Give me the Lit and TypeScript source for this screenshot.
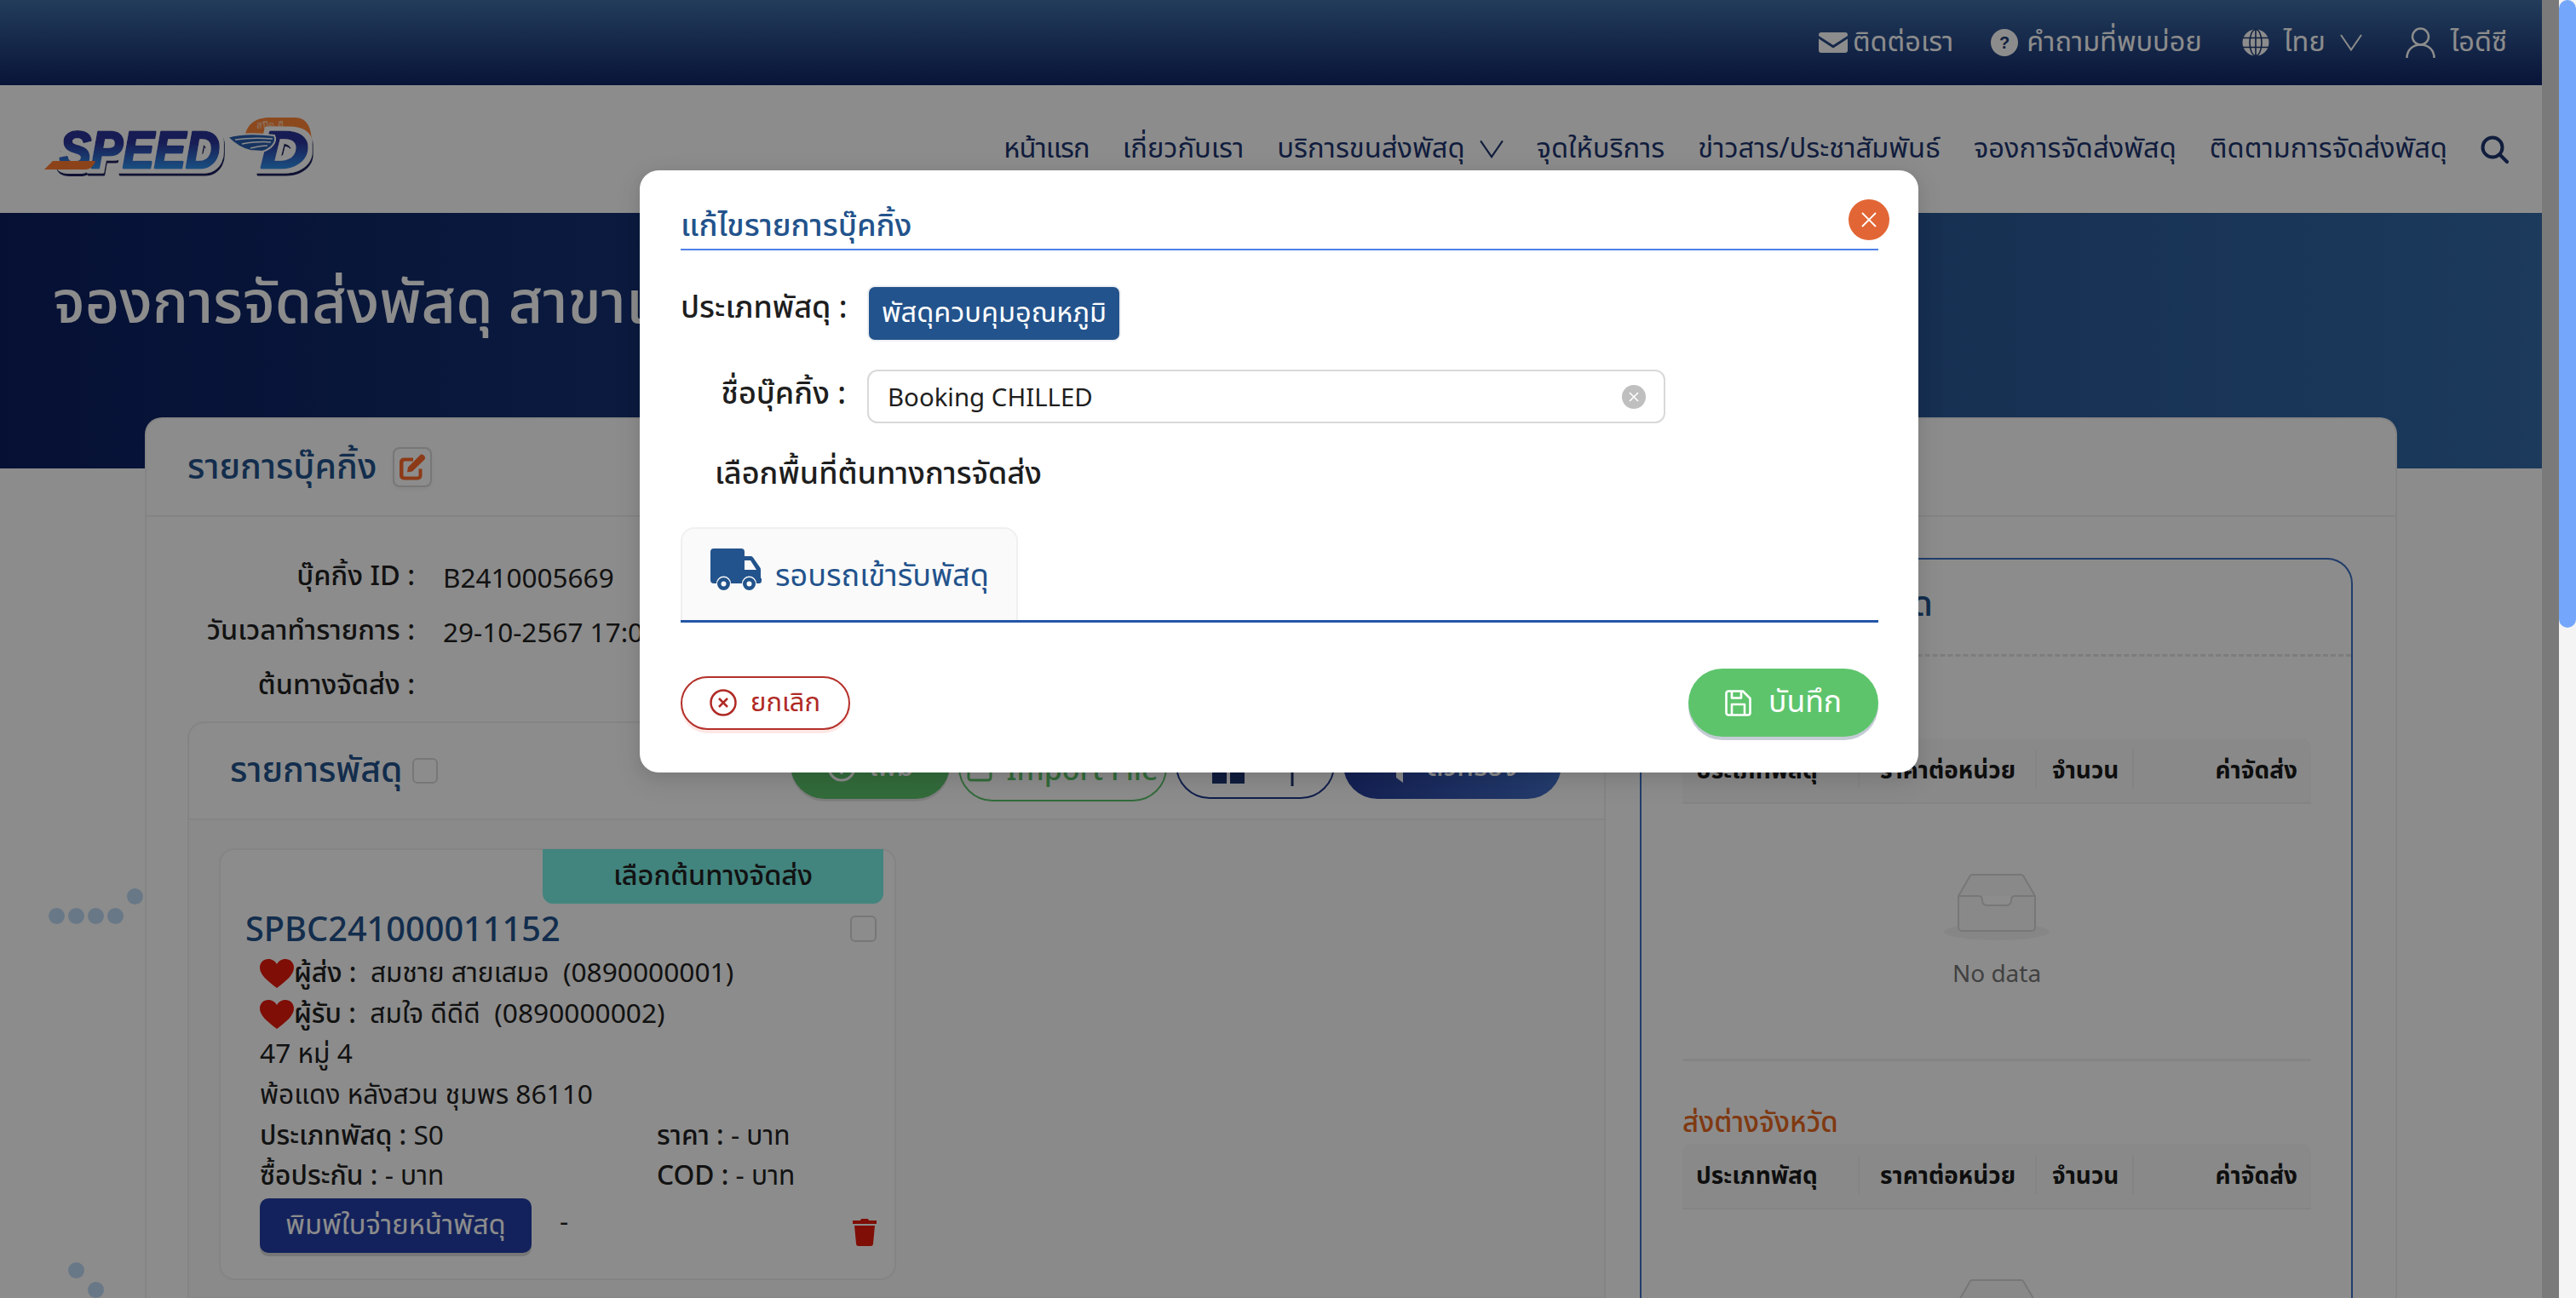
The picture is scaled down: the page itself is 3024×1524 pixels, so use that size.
import { LitElement, html, css } from "lit";
import { customElement } from "lit/decorators.js";

const chevron = (w = 26, h = 20) => html`<svg class="chev" width=${w} height=${h} viewBox="0 0 26 20" fill="none" stroke="currentColor" stroke-width="2"><path d="M1 1 L13 18.5 L25 1"/></svg>`;

const truck = html`<svg width="60" height="50" viewBox="0 0 60 50" fill="#23538c"><path d="M4 0H36a4 4 0 0 1 4 4V9H47a4 4 0 0 1 3 1.4L58 22a4 4 0 0 1 1 3V35h1v3a3 3 0 0 1-3 3H54a8.500 8.500 0 0 0-17 0H24a8.500 8.500 0 0 0-17 0H4a4 4 0 0 1-4-4V4a4 4 0 0 1 4-4ZM40 14V25H54L47 14Z"/><path d="M15.500 34a7.500 7.500 0 1 0 0 15 7.500 7.500 0 0 0 0-15Zm0 4.500a3 3 0 1 1 0 6 3 3 0 0 1 0-6ZM45.500 34a7.500 7.500 0 1 0 0 15 7.500 7.500 0 0 0 0-15Zm0 4.500a3 3 0 1 1 0 6 3 3 0 0 1 0-6Z"/></svg>`;

const heart = html`<svg class="heart" width="40" height="34" viewBox="0 0 40 34"><path fill="#e81a0c" d="M20 34C8 25 0 18 0 10 0 4 4.500 0 10 0c4.500 0 8 2.500 10 6 2-3.500 5.500-6 10-6 5.500 0 10 4 10 10 0 8-8 15-20 24Z"/></svg>`;

const inbox = html`<svg width="124" height="78" viewBox="0 0 124 78" fill="none"><ellipse cx="62" cy="68" rx="62" ry="10" fill="#f5f5f5"/><path d="M17 26 31 2a3 3 0 0 1 2-1h58a3 3 0 0 1 2 1l14 24v37a4 4 0 0 1-4 4H21a4 4 0 0 1-4-4Z" fill="#fafafa" stroke="#d9d9d9" stroke-width="2"/><path d="M17 26h24c3 0 4 2 4 5s2 6 5 6h24c3 0 5-3 5-6s1-5 4-5h24" fill="#fff" stroke="#d9d9d9" stroke-width="2"/></svg>`;

const logo = html`<svg width="320" height="72" viewBox="0 0 320 72">
  <defs>
    <linearGradient id="lg" gradientUnits="userSpaceOnUse" x1="0" y1="-44" x2="0" y2="2"><stop offset="0.3" stop-color="#2c3499"/><stop offset="1" stop-color="#2f93ee"/></linearGradient>
    <filter id="halo" x="-15%" y="-30%" width="130%" height="160%">
      <feMorphology in="SourceAlpha" operator="dilate" radius="4.500" result="fat"/>
      <feFlood flood-color="#ffffff" result="wc"/>
      <feComposite in="wc" in2="fat" operator="in" result="white"/>
      <feOffset in="fat" dx="1" dy="2.500" result="fato"/>
      <feFlood flood-color="#1c2460" result="dc"/>
      <feComposite in="dc" in2="fato" operator="in" result="dark"/>
      <feMerge><feMergeNode in="dark"/><feMergeNode in="white"/><feMergeNode in="SourceGraphic"/></feMerge>
    </filter>
  </defs>
  <path d="M237 26 C240 10 250 3 268 3 L296 3 C310 3 316 14 316 34 L240 30 Z" fill="#ff8537"/>
  <text x="251" y="16" font-family="Noto Sans, sans-serif" font-size="11" fill="#ffd9bd">สปีด-ดี</text>
  <g font-family="Liberation Sans, sans-serif" font-weight="700" font-style="italic" font-size="62" fill="url(#lg)" stroke="url(#lg)" stroke-width="3" stroke-linejoin="round" filter="url(#halo)">
    <text transform="translate(20 62) scale(.895 1)">SPEED</text>
    <text transform="translate(256 62) scale(1.250 1)">D</text>
  </g>
  <path d="M2 64 L50 64 C56 64 60 60 62 54 L12 54 Z" fill="#ff7a30"/>
  <path d="M217 26 C234 21 256 22 272 24 C276 32 268 40 258 43 L244 42 C234 40 224 33 217 26 Z" fill="#2a5fb0" stroke="#fff" stroke-width="2"/>
  <path d="M226 29 C240 27 256 27 270 28 M234 34 C246 32 258 31 268 32 M244 39 C252 37 260 36 264 36" stroke="#fff" stroke-width="1.500" fill="none"/>
</svg>`;

@customElement("app-root")
export class AppRoot extends LitElement {
  static styles = css`
    :host { display: flex; width: 3024px; height: 1524px; overflow: hidden; font-family: "Noto Sans", "Noto Sans Thai", sans-serif; color: #222; background: #f1f1f1; }
    * { box-sizing: border-box; }
    .viewport { position: relative; width: 3004px; height: 1524px; overflow: hidden; display: flex; background: #dedede; }
    .sb { width: 20px; height: 1524px; background: #f4f4f4; }
    .thumb { width: 20px; height: 737px; background: #74a7fb; border-radius: 10px; }
    .page { width: 2984px; height: 1524px; background: #fff; position: relative; flex: none; }

    .top { height: 100px; background: linear-gradient(#406fa6, #0f2567); display: flex; justify-content: flex-end; align-items: center; padding-right: 41px; color: #fff; font-size: 32.500px; }
    .top .it { display: flex; align-items: center; }
    .top .mail { gap: 6px; margin-right: 44px; }
    .top .faq { gap: 10px; margin-right: 47px; }
    .top .lang { gap: 17px; margin-right: 51px; }
    .top .user { gap: 18px; }
    .nav { height: 150px; background: #fff; display: flex; align-items: center; padding: 0 39px 0 50px; color: #1e3570; font-size: 32.700px; }
    .nav .logo { margin-right: auto; margin-top: 2px; }
    .nav .links { display: flex; gap: 39px; align-items: center; }
    .nav .lk { display: flex; align-items: center; gap: 17px; white-space: nowrap; }
    .nav .first { letter-spacing: -1px; }
    .hero { height: 300px; background: linear-gradient(90deg, #0a1e60, #336aa7); padding: 58px 0 0 62px; color: #fff; font-size: 70px; line-height: 88px; font-weight: 500; white-space: nowrap; }

    .main { width: 2644px; margin: -60px 0 0 170px; background: #fff; border-radius: 20px 20px 0 0; border: 2px solid #f0f0f0; border-bottom: 0; height: 1100px; position: relative; }
    .mhead { height: 115px; border-bottom: 2px solid #f0f0f0; display: flex; align-items: center; padding-left: 48px; gap: 19px; }
    .mhead .t { font-size: 41px; color: #23538c; font-weight: 500; }
    .editb { width: 46px; height: 47px; border: 2px solid #d9d9d9; border-radius: 8px; display: flex; align-items: center; justify-content: center; box-shadow: 0 2px 4px rgba(0,0,0,.05); }
    .mbody { display: flex; padding: 0 0 0 48px; gap: 40px; }
    .left { width: 1665px; padding-top: 38px; flex: none; }
    .info { display: grid; grid-template-columns: 267px 1fr; column-gap: 33px; grid-auto-rows: 64px; align-items: center; font-size: 31.500px; }
    .info .l { text-align: right; font-weight: 500; white-space: nowrap; font-size: 32.500px; }
    .inner { margin-top: 10px; border: 2px solid #f0f0f0; border-radius: 20px 20px 0 0; background: #fbfbfb; }
    .ihead { height: 114px; border-bottom: 2px solid #f0f0f0; display: flex; align-items: center; padding-left: 48px; position: relative; background: #fff; border-radius: 20px 20px 0 0; }
    .ihead .t { font-size: 41px; color: #23538c; font-weight: 500; }
    .cb { display: block; border: 2px solid #d9d9d9; border-radius: 6px; background: #fff; flex: none; }
    .ihead .cb { width: 30px; height: 30px; margin-left: 11px; }
    .btns { position: absolute; right: 50px; bottom: 20px; display: flex; gap: 10px; font-size: 32px; font-weight: 500; }
    .bt { height: 80px; border-radius: 40px; display: flex; align-items: center; justify-content: center; gap: 16px; white-space: nowrap; padding-top: 6px; }
    .b1 { width: 187px; background: #5dc46c; color: #fff; box-shadow: 0 3px 0 rgba(0,0,0,.1); }
    .b2 { width: 245px; height: 83px; border: 2px solid #5dc46c; color: #5dc46c; background: #fff; font-size: 34px; }
    .b3 { width: 187px; border: 2px solid #1e3a8a; color: #1e3570; background: #fff; }
    .b4 { width: 256px; background: linear-gradient(90deg, #243a96, #4370c8); color: #fff; }

    .ibody { padding: 33px 35px 0; height: 560px; }
    .item { width: 795px; height: 507px; background: #fff; border: 2px solid #f0f0f0; border-radius: 18px; position: relative; padding: 69px 21px 0 29px; font-size: 31.700px; }
    .tag { position: absolute; right: 13px; top: -1px; width: 400px; height: 64px; background: #79f0e6; border-radius: 0 0 12px 12px; display: flex; align-items: center; justify-content: center; font-size: 32.500px; font-weight: 500; }
    .code { display: flex; justify-content: space-between; align-items: center; height: 46px; font-size: 39.700px; font-weight: 500; color: #23538c; line-height: 46px; margin-bottom: 6px; }
    .code .cb { width: 31px; height: 31px; }
    .rows { margin-left: 17px; }
    .row { height: 47.700px; display: flex; align-items: center; white-space: pre; }
    .row b { font-weight: 500; }
    .row .c { width: 466px; }
    .heart { flex: none; }
    .pr { display: flex; margin: 2px 0 0 17px; height: 68px; }
    .print { width: 319px; height: 64px; background: #243fa8; color: #fff; border-radius: 10px; display: flex; align-items: center; justify-content: center; box-shadow: 0 4px 0 rgba(0,0,0,.15); font-size: 32.700px; }
    .dash { margin: 4px 0 0 33px; }
    .trash { margin: 24px 0 0 auto; }

    .right { width: 837px; height: 950px; margin-top: 48px; flex: none; border: 2px solid #3d6fc4; border-bottom: 0; border-radius: 30px 30px 0 0; }
    .rhead { height: 114px; border-bottom: 3px dashed #e4e4e4; font-size: 41px; color: #23538c; font-weight: 500; position: relative; }
    .rhead span { position: absolute; right: 491px; top: 22px; }
    .rbody { padding: 44px 47px 0 48px; }
    .sec { font-size: 33px; line-height: 52px; height: 52px; color: #e8691f; font-weight: 500; }
    .th { height: 77px; background: #fafafa; border-bottom: 2px solid #f0f0f0; border-radius: 10px 10px 0 0; display: grid; grid-template-columns: 208px 208px 114px 208px; align-items: center; font-size: 28px; font-weight: 700; color: #1a1a1a; padding-bottom: 3px; }
    .th div { padding: 0 16px; height: 46px; line-height: 46px; white-space: nowrap; border-right: 2px solid #f0f0f0; }
    .th .h2 { padding: 0 0 0 24px; }
    .th .h3 { padding: 0 0 0 18px; }
    .th div:last-child { border: 0; text-align: right; }
    .empty { height: 302px; border-bottom: 3px solid #f0f0f0; padding-top: 82px; display: flex; flex-direction: column; align-items: center; }
    .nod { font-size: 28px; color: #777; margin-top: 18px; line-height: 40px; }
    .s2 { margin-top: 45px; }

    .dots { position: absolute; left: 0; top: 0; }
    .dot { position: absolute; width: 19px; height: 19px; border-radius: 50%; background: #c0daf6; }

    .overlay { position: absolute; inset: 0; background: rgba(0,0,0,.45); display: flex; justify-content: center; align-items: flex-start; padding: 200px 1px 0 0; }
    .modal { position: relative; width: 1501px; height: 707px; background: #fff; border-radius: 22px; padding: 0 47px 0 48px; box-shadow: 0 6px 16px rgba(0,0,0,.08), 0 9px 28px 8px rgba(0,0,0,.05); }
    .mt { height: 94px; padding-top: 34px; line-height: 58px; border-bottom: 2px solid #4f81e8; font-size: 36.300px; font-weight: 500; color: #23538c; }
    .close { position: absolute; top: 34px; right: 34px; width: 48px; height: 48px; border-radius: 50%; background: #e26635; display: flex; align-items: center; justify-content: center; }
    .fr { display: grid; grid-template-columns: 194px 1fr; column-gap: 25px; font-size: 36px; font-weight: 500; color: #1e1e1e; }
    .fr .lab { text-align: right; line-height: 46px; white-space: nowrap; }
    .r1 { margin-top: 41px; }
    .r1 .lab { margin-top: 2px; }
    .type { width: 298px; height: 66px; background: #23538c; border: 2px solid #eef0f3; border-radius: 9px; color: #fff; font-size: 32.600px; font-weight: 400; display: flex; align-items: center; justify-content: center; white-space: nowrap; }
    .r2 { margin-top: 33px; }
    .r2 .lab { margin-top: 4px; }
    .input { width: 937px; height: 63px; border: 2px solid #d9d9d9; border-radius: 12px; padding: 0 21px 0 22px; display: flex; align-items: center; justify-content: space-between; font-size: 29.400px; font-weight: 400; }
    .clear { width: 28px; height: 28px; border-radius: 50%; background: #bfbfbf; display: flex; align-items: center; justify-content: center; }
    .pick { margin: 35px 0 0 40px; font-size: 36px; font-weight: 500; line-height: 46px; color: #1e1e1e; }
    .tabs { margin-top: 41px; height: 112px; border-bottom: 3px solid #2457a6; }
    .tab { width: 396px; height: 109px; background: #fafafa; border: 2px solid #f0f0f0; border-bottom: 0; border-radius: 16px 16px 0 0; display: flex; align-items: flex-start; padding: 23px 0 0 33px; gap: 16px; color: #23538c; font-size: 36px; }
    .tab span { margin-top: 8px; line-height: 46px; }
    .foot { display: flex; justify-content: space-between; align-items: center; margin-top: 54px; }
    .cancel { width: 199px; height: 63px; border: 2px solid #b5302a; border-radius: 32px; color: #b02a25; background: #fff; display: flex; align-items: center; gap: 16px; padding-left: 32px; font-size: 31px; box-shadow: 0 4px 0 #fde8e6; }
    .save { width: 223px; height: 80px; border-radius: 40px; background: #5dc46c; color: #fff; display: flex; align-items: center; justify-content: center; gap: 20px; font-size: 35.500px; box-shadow: 0 4px 0 #c4ccd4; }
  `;

  private th(label: boolean) {
    return html`<div class="th"><div>ประเภทพัสดุ</div><div class="h2">ราคาต่อหน่วย</div><div class="h3">จำนวน</div><div>ค่าจัดส่ง</div></div>
      <div class="empty">${inbox}${label ? html`<div class="nod">No data</div>` : ""}</div>`;
  }

  render() {
    const dots = [[66,1075],[89,1075],[112,1075],[135,1075],[158,1052],[89,1491],[112,1514]];
    return html`
    <div class="viewport">
      <div class="page">
        <div class="top">
          <div class="it mail">
            <svg width="34" height="24" viewBox="0 0 34 24" fill="#fff"><path d="M3 0h28a3 3 0 0 1 3 3v1L17 15 0 4V3a3 3 0 0 1 3-3Z"/><path d="M0 7.500 17 18.500 34 7.500V21a3 3 0 0 1-3 3H3a3 3 0 0 1-3-3Z"/></svg>
            ติดต่อเรา
          </div>
          <div class="it faq">
            <svg width="32" height="32" viewBox="0 0 32 32"><circle cx="16" cy="16" r="16" fill="#fff"/><text x="16" y="23" text-anchor="middle" font-family="Liberation Sans, sans-serif" font-weight="700" font-size="20" fill="#1d3a72">?</text></svg>
            คำถามที่พบบ่อย
          </div>
          <div class="it lang">
            <svg width="32" height="32" viewBox="0 0 32 32" fill="none"><circle cx="16" cy="16" r="15.500" fill="#fff"/><ellipse cx="16" cy="16" rx="7" ry="15.500" stroke="#1d3a72" stroke-width="1.600"/><path d="M16 0v32M1 10.500h30M1 21.500h30" stroke="#1d3a72" stroke-width="1.600"/></svg>
            ไทย ${chevron(26, 20)}
          </div>
          <div class="it user">
            <svg width="35" height="36" viewBox="0 0 35 36" fill="none" stroke="#fff" stroke-width="2.500"><circle cx="17.500" cy="11" r="9.500"/><path d="M1.500 36C1.500 27 8 20.500 17.500 20.500S33.500 27 33.500 36"/></svg>
            ไอดีซี
          </div>
        </div>
        <div class="nav">
          <div class="logo">${logo}</div>
          <div class="links">
            <div class="lk first">หน้าแรก</div>
            <div class="lk">เกี่ยวกับเรา</div>
            <div class="lk">บริการขนส่งพัสดุ ${chevron(28, 22)}</div>
            <div class="lk">จุดให้บริการ</div>
            <div class="lk">ข่าวสาร/ประชาสัมพันธ์</div>
            <div class="lk">จองการจัดส่งพัสดุ</div>
            <div class="lk">ติดตามการจัดส่งพัสดุ</div>
            <svg width="33" height="33" viewBox="0 0 33 33" fill="none" stroke="#1e3570" stroke-width="4"><circle cx="14" cy="14" r="11.500"/><path d="M22.500 22.500 31 31" stroke-linecap="round"/></svg>
          </div>
        </div>
        <div class="hero">จองการจัดส่งพัสดุ สาขาเ</div>
        <div class="main">
          <div class="mhead">
            <div class="t">รายการบุ๊คกิ้ง</div>
            <div class="editb"><svg width="30" height="31" viewBox="0 0 30 30" fill="#ff6a2a"><path d="M6 4h10v4H6a1.500 1.500 0 0 0-1.500 1.500v15A1.500 1.500 0 0 0 6 26h15a1.500 1.500 0 0 0 1.500-1.500V17h4v8a5 5 0 0 1-5 5H5a5 5 0 0 1-5-5V9a5 5 0 0 1 5-5Z"/><path d="M24 1a3 3 0 0 1 4.200 0l1 1a3 3 0 0 1 0 4.200L15 20l-6 1 1-6Z"/></svg></div>
          </div>
          <div class="mbody">
            <div class="left">
              <div class="info">
                <div class="l">บุ๊คกิ้ง ID :</div><div>B2410005669</div>
                <div class="l">วันเวลาทำรายการ :</div><div>29-10-2567 17:00</div>
                <div class="l">ต้นทางจัดส่ง :</div><div></div>
              </div>
              <div class="inner">
                <div class="ihead">
                  <div class="t">รายการพัสดุ</div><span class="cb"></span>
                  <div class="btns">
                    <div class="bt b1"><svg width="34" height="34" viewBox="0 0 34 34" fill="none" stroke="#fff" stroke-width="3"><circle cx="17" cy="17" r="15"/><path d="M17 9v16M9 17h16"/></svg>เพิ่ม</div>
                    <div class="bt b2"><svg width="30" height="30" viewBox="0 0 30 30" fill="none" stroke="#5dc46c" stroke-width="3"><rect x="2" y="2" width="26" height="26" rx="3"/></svg>Import File</div>
                    <div class="bt b3"><svg width="38" height="38" viewBox="0 0 38 38" fill="#1e3570"><rect width="17" height="17"/><rect x="21" width="17" height="17"/><rect y="21" width="17" height="17"/><rect x="21" y="21" width="17" height="17"/></svg><svg style="margin-left:32px" width="16" height="44" viewBox="0 0 16 44" fill="none" stroke="#1e3570" stroke-width="3"><path d="M8 44V3M1 11l7-8 7 8"/></svg></div>
                    <div class="bt b4"><svg width="30" height="36" viewBox="0 0 30 36" fill="#fff"><path d="M0 0h30L19 15v21l-8-6V15Z"/></svg>ตัวกรอง</div>
                  </div>
                </div>
                <div class="ibody">
                  <div class="item">
                    <div class="tag">เลือกต้นทางจัดส่ง</div>
                    <div class="code">SPBC241000011152<span class="cb"></span></div>
                    <div class="rows">
                      <div class="row">${heart}<b>ผู้ส่ง :</b>  สมชาย สายเสมอ  (0890000001)</div>
                      <div class="row">${heart}<b>ผู้รับ :</b>  สมใจ ดีดีดี  (0890000002)</div>
                      <div class="row">47 หมู่ 4</div>
                      <div class="row">พ้อแดง หลังสวน ชุมพร 86110</div>
                      <div class="row"><div class="c"><b>ประเภทพัสดุ :</b> S0</div><div><b>ราคา :</b> - บาท</div></div>
                      <div class="row"><div class="c"><b>ซื้อประกัน :</b> - บาท</div><div><b>COD :</b> - บาท</div></div>
                    </div>
                    <div class="pr">
                      <div class="print">พิมพ์ใบจ่ายหน้าพัสดุ</div>
                      <div class="dash">-</div>
                      <svg class="trash" width="28" height="32" viewBox="0 0 28 32" fill="#e81a0c"><path d="M10 0h8l1 2h9v4H0V2h9Z"/><path d="M2 8h24l-2 21a3 3 0 0 1-3 3H7a3 3 0 0 1-3-3Z"/></svg>
                    </div>
                  </div>
                </div>
              </div>
            </div>
            <div class="right">
              <div class="rhead"><span>สรุปยอด</span></div>
              <div class="rbody">
                <div class="sec">ส่งในจังหวัด</div>
                ${this.th(true)}
                <div class="sec s2">ส่งต่างจังหวัด</div>
                ${this.th(false)}
              </div>
            </div>
          </div>
        </div>
        <div class="dots">${dots.map(([x, y]) => html`<span class="dot" style="left:${x - 9.5}px;top:${y - 9.5}px"></span>`)}</div>
      </div>
      <div class="overlay">
        <div class="modal">
          <div class="mt">แก้ไขรายการบุ๊คกิ้ง</div>
          <div class="close"><svg width="20" height="20" viewBox="0 0 20 20" stroke="#fff" stroke-width="1.800" fill="none"><path d="M2 2 18 18M18 2 2 18"/></svg></div>
          <div class="fr r1"><div class="lab">ประเภทพัสดุ :</div><div class="type">พัสดุควบคุมอุณหภูมิ</div></div>
          <div class="fr r2"><div class="lab">ชื่อบุ๊คกิ้ง :</div>
            <div class="input">Booking CHILLED<span class="clear"><svg width="12" height="12" viewBox="0 0 12 12" stroke="#fff" stroke-width="1.600" fill="none"><path d="M1 1 11 11M11 1 1 11"/></svg></span></div></div>
          <div class="pick">เลือกพื้นที่ต้นทางการจัดส่ง</div>
          <div class="tabs"><div class="tab">${truck}<span>รอบรถเข้ารับพัสดุ</span></div></div>
          <div class="foot">
            <div class="cancel"><svg width="32" height="32" viewBox="0 0 32 32" fill="none" stroke="#b02a25" stroke-width="2.500"><circle cx="16" cy="16" r="14.500"/><path d="M11 11 21 21M21 11 11 21"/></svg>ยกเลิก</div>
            <div class="save"><svg width="31" height="31" viewBox="0 0 31 31" fill="none" stroke="#fff" stroke-width="2.600" stroke-linejoin="round"><path d="M4 1.500H21L29.500 10V27a2.500 2.500 0 0 1-2.500 2.500H4A2.500 2.500 0 0 1 1.500 27V4A2.500 2.500 0 0 1 4 1.500Z"/><path d="M8 1.500V9.500H19V1.500M8 29.500V17H23V29.500"/></svg>บันทึก</div>
          </div>
        </div>
      </div>
    </div>
    <div class="sb"><div class="thumb"></div></div>`;
  }
}
